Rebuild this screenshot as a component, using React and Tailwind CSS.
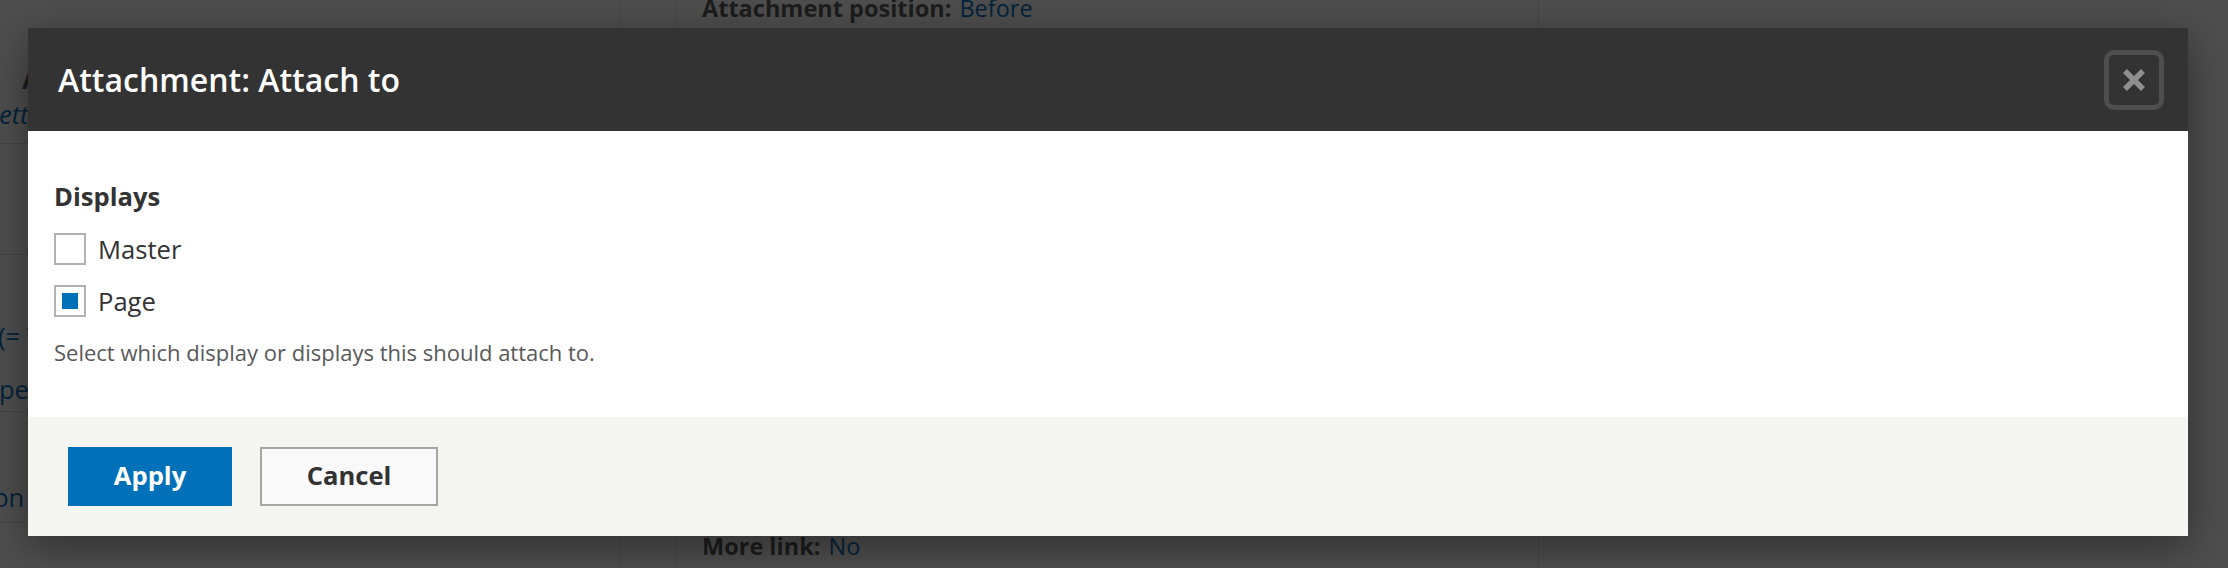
import React from "react";

const font = { fontFamily: "'Open Sans', 'Noto Sans', sans-serif" };

function Checkbox({ checked }) {
  return (
    <span className="flex h-[32px] w-[32px] shrink-0 items-center justify-center border-2 border-[#b3b3b3] bg-white">
      {checked ? <span className="block h-[16px] w-[16px] bg-[#0071b8]" /> : null}
    </span>
  );
}

function Option({ label, checked }) {
  return (
    <label className="flex h-[35px] items-center">
      <Checkbox checked={checked} />
      <span className="ml-[12px] text-[25.6px] leading-[35px] text-[#333]">{label}</span>
    </label>
  );
}

export default function App() {
  return (
    <div className="relative h-[568px] w-[2228px] overflow-hidden bg-[#4e4e4e]" style={font}>
      {/* page underneath the overlay */}
      <div className="flex h-full">
        <div className="flex w-[621px] flex-col overflow-hidden border-r border-[#474747]">
          <div className="h-[144px] border-b border-[#444]">
            <div className="mt-[62px] ml-[22px] whitespace-nowrap text-[25.6px] font-bold leading-[35px] text-[#1c1c1c]">A</div>
            <div className="-ml-[14px] whitespace-nowrap text-[25.6px] italic leading-[35px] text-[#03233a]">Settings</div>
          </div>
          <div className="h-[111px] border-b border-[#444]" />
          <div className="h-[157px] border-b border-[#444]">
            <div className="mt-[64px] -ml-[2px] whitespace-nowrap text-[25.6px] leading-[35px] text-[#03233a]">(= Yes)</div>
            <div className="mt-[18px] -ml-[28px] whitespace-nowrap text-[25.6px] leading-[35px] text-[#03233a]">Type</div>
          </div>
          <div className="h-[111px] border-b border-[#444]">
            <div className="mt-[68px] -ml-[58px] whitespace-nowrap text-[25.6px] leading-[35px] text-[#03233a]">Option</div>
          </div>
        </div>
        <div className="w-[56px] border-r border-[#474747]" />
        <div className="flex w-[862px] flex-col justify-between border-r border-[#474747] pl-[25px] pb-[5px]">
          <div className="-mt-[8px] text-[23.5px] leading-[33px]">
            <span className="font-bold text-[#1c1c1c]">Attachment position:</span>
            <span className="ml-[8px] text-[#03233a]">Before</span>
          </div>
          <div className="text-[23.5px] leading-[33px]">
            <span className="font-bold text-[#1c1c1c]">More link:</span>
            <span className="ml-[8px] text-[#03233a]">No</span>
          </div>
        </div>
        <div className="flex-1" />
      </div>

      {/* modal dialog */}
      <div className="absolute left-[28px] top-[28px] w-[2160px] shadow-[0_10px_40px_rgba(0,0,0,0.4)]">
        <div className="flex h-[103px] items-center justify-between bg-[#333333] pl-[30px] pr-[24px]">
          <h1 className="text-[32px] font-semibold text-white">Attachment: Attach to</h1>
          <button className="flex h-[60px] w-[60px] items-center justify-center rounded-[10px] border-[5px] border-[#4f4f4f] bg-[#333333]">
            <svg width="28" height="28" viewBox="0 0 28 28">
              <path d="M5 5 L23 23 M23 5 L5 23" stroke="#8f8f8f" strokeWidth="5.5" strokeLinecap="butt" fill="none" />
            </svg>
          </button>
        </div>
        <div className="h-[286px] bg-white pl-[26px] pt-[47.5px]">
          <div className="text-[25.6px] font-bold leading-[35px] text-[#333]">Displays</div>
          <div className="mt-[18px] flex flex-col gap-[17px]">
            <Option label="Master" checked={false} />
            <Option label="Page" checked />
          </div>
          <div className="mt-[18px] text-[22px] leading-[30px] text-[#595959]">
            Select which display or displays this should attach to.
          </div>
        </div>
        <div className="flex h-[119px] items-center gap-[28px] bg-[#f5f5f2] pl-[40px]">
          <button className="flex h-[59px] w-[164px] items-center justify-center bg-[#0071b8] text-[25.6px] font-bold text-white">
            Apply
          </button>
          <button className="flex h-[59px] w-[178px] items-center justify-center border-2 border-[#a6a6a6] bg-[#f9f9f9] text-[25.6px] font-bold text-[#333]">
            Cancel
          </button>
        </div>
      </div>
    </div>
  );
}
